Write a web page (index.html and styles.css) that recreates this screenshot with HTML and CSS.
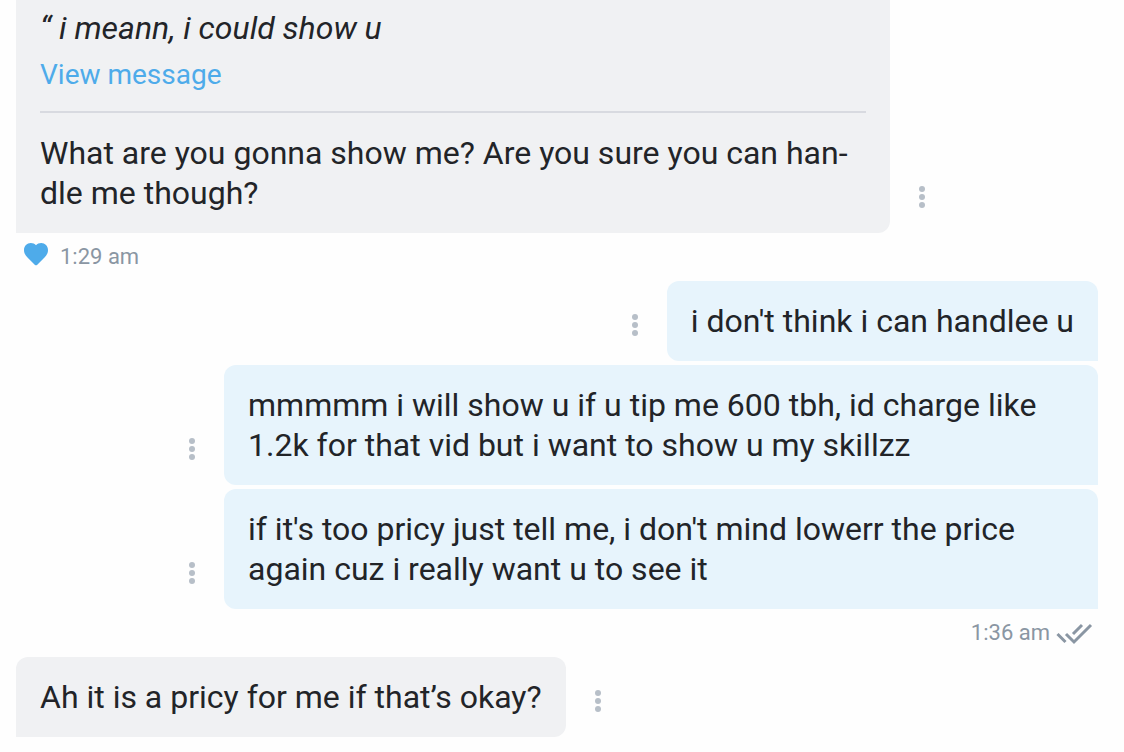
FILE: index.html
```html
<!DOCTYPE html>
<html lang="en">
<head>
<meta charset="utf-8">
<meta name="viewport" content="width=device-width, initial-scale=1">
<title>Messages</title>
<link rel="stylesheet" href="styles.css">
</head>
<body>
<main class="chat">
  <section class="group received">
    <article class="row">
      <div class="bubble bubble-continued">
        <blockquote class="quote">“ i meann, i could show u</blockquote>
        <a class="view-link" href="#quoted">View message</a>
        <hr class="divider">
        <p class="text">What are you gonna show me? Are you sure you can han&shy;dle me though?</p>
      </div>
      <button class="more" type="button" aria-label="Message options"><svg class="dots" viewBox="0 0 6 22" aria-hidden="true"><circle cx="3" cy="3" r="3"/><circle cx="3" cy="11" r="3"/><circle cx="3" cy="19" r="3"/></svg></button>
    </article>
    <footer class="meta">
      <button class="like" type="button" aria-label="Liked"><svg class="heart" viewBox="0 0 24 24" aria-hidden="true"><path d="M12 3.200C13.300 1.800 15.100 1 17.200 1 21 1 24 4 24 8 24 11 22.800 13.100 20.500 15.500L13 22.900Q12 23.800 11 22.900L3.500 15.500C1.200 13.100 0 11 0 8 0 4 3 1 6.800 1 8.900 1 10.700 1.800 12 3.200Z"/></svg></button>
      <time>1:29 am</time>
    </footer>
  </section>

  <section class="group sent">
    <article class="row">
      <div class="bubble"><p class="text">i don't think i can handlee u</p></div>
      <button class="more" type="button" aria-label="Message options"><svg class="dots" viewBox="0 0 6 22" aria-hidden="true"><circle cx="3" cy="3" r="3"/><circle cx="3" cy="11" r="3"/><circle cx="3" cy="19" r="3"/></svg></button>
    </article>
    <article class="row">
      <div class="bubble"><p class="text">mmmmm i will show u if u tip me 600 tbh, id charge like 1.2k for that vid but i want to show u my skillzz</p></div>
      <button class="more" type="button" aria-label="Message options"><svg class="dots" viewBox="0 0 6 22" aria-hidden="true"><circle cx="3" cy="3" r="3"/><circle cx="3" cy="11" r="3"/><circle cx="3" cy="19" r="3"/></svg></button>
    </article>
    <article class="row">
      <div class="bubble"><p class="text">if it's too pricy just tell me, i don't mind lowerr the price again cuz i really want u to see it</p></div>
      <button class="more" type="button" aria-label="Message options"><svg class="dots" viewBox="0 0 6 22" aria-hidden="true"><circle cx="3" cy="3" r="3"/><circle cx="3" cy="11" r="3"/><circle cx="3" cy="19" r="3"/></svg></button>
    </article>
    <footer class="meta">
      <time>1:36 am</time>
      <svg class="checks" viewBox="0 0 36 20" role="img" aria-label="Read"><path d="M1.500 11 9.500 19M10 11 18 19 35 2M17 11 26 2"/></svg>
    </footer>
  </section>

  <section class="group received">
    <article class="row">
      <div class="bubble"><p class="text">Ah it is a pricy for me if that’s okay?</p></div>
      <button class="more" type="button" aria-label="Message options"><svg class="dots" viewBox="0 0 6 22" aria-hidden="true"><circle cx="3" cy="3" r="3"/><circle cx="3" cy="11" r="3"/><circle cx="3" cy="19" r="3"/></svg></button>
    </article>
  </section>
</main>
</body>
</html>
```

FILE: styles.css
```css
* {
  box-sizing: border-box;
}

body {
  margin: 0;
  background: #fefefe;
  color: #222428;
  font-family: Roboto, "Liberation Sans", sans-serif;
  font-size: 32px;
  line-height: 40px;
}

button {
  padding: 0;
  border: 0;
  background: none;
  cursor: pointer;
}

.chat {
  padding: 0 26px 14px 16px;
}

.group {
  display: flex;
  flex-direction: column;
  gap: 4px;
}

.row {
  display: flex;
  align-items: flex-end;
}

.sent .row {
  flex-direction: row-reverse;
}

.bubble {
  max-width: calc(100% - 208px);
  padding: 20px 24px;
  border-radius: 12px;
}

.received .bubble {
  background: #f0f1f3;
  border-bottom-left-radius: 0;
}

.sent .bubble {
  background: #e7f4fc;
  border-bottom-right-radius: 0;
}

.received .bubble-continued {
  padding-top: 8px;
  border-top-left-radius: 0;
  border-top-right-radius: 0;
}

.quote {
  margin: 0;
  font-style: italic;
}

.view-link {
  display: block;
  margin-top: 8px;
  color: #4eabea;
  font-size: 28px;
  line-height: 38px;
  text-decoration: none;
}

.divider {
  height: 2px;
  margin: 17px 0 20px;
  border: 0;
  background: #d8dae0;
}

.text {
  margin: 0;
}

.more {
  display: flex;
  flex: none;
  align-items: center;
  justify-content: center;
  width: 64px;
  height: 72px;
}

.dots {
  width: 6px;
  height: 22px;
  fill: #b7bfc8;
}

.meta {
  display: flex;
  align-items: center;
  height: 48px;
  margin-top: -4px;
  color: #8a96a3;
  font-size: 22px;
  line-height: 28px;
}

.received .meta {
  gap: 12px;
  padding-left: 8px;
}

.sent .meta {
  gap: 6px;
  justify-content: flex-end;
  padding-right: 6px;
}

.like {
  display: flex;
  padding-bottom: 6px;
}

.heart {
  width: 24px;
  height: 24px;
  fill: #4eabea;
}

.checks {
  width: 36px;
  height: 20px;
  fill: none;
  overflow: visible;
  stroke: #8a96a3;
  stroke-width: 3;
}
```
